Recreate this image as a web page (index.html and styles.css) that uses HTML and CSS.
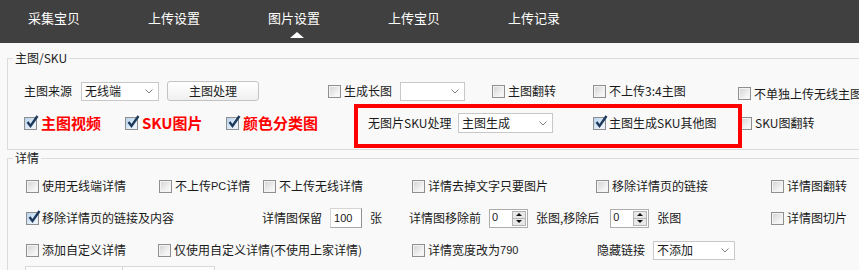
FILE: index.html
```html
<!DOCTYPE html>
<html>
<head>
	<meta charset="UTF-8">
	<title>图片设置</title>
	<link rel="stylesheet" href="styles.css">
</head>
<body>
	<div class="nav">
		<ul class="tabs">
			<li>采集宝贝</li>
			<li>上传设置</li>
			<li class="active">图片设置</li>
			<li>上传宝贝</li>
			<li>上传记录</li>
		</ul>
	</div>
	<div class="main">
		<!-- 主图 -->
		<fieldset class="group group-main">
			<legend>主图/SKU</legend>
			<div class="row row-src">
				<span>主图来源</span>
				<div class="select"><span>无线端</span><svg viewBox="0 0 8 5"><path d="M0.5 0.5 L4 4 L7.5 0.5" fill="none" stroke="#808080"/></svg></div>
				<div class="btn">主图处理</div>
				<label class="chk"><i class="cb"></i>生成长图</label>
				<div class="select sel-long"><span></span><svg viewBox="0 0 8 5"><path d="M0.5 0.5 L4 4 L7.5 0.5" fill="none" stroke="#808080"/></svg></div>
				<label class="chk"><i class="cb"></i>主图翻转</label>
				<label class="chk"><i class="cb"></i>不上传3:4主图</label>
				<label class="chk low"><i class="cb"></i>不单独上传无线主图</label>
			</div>
			<div class="row row-pic">
				<label class="chk red"><i class="cb on"><svg class="tick" viewBox="0 0 14 14"><path d="M2.5 7 L5.5 11 L12.5 1" fill="none" stroke="#1d3a5c" stroke-width="2.4"/></svg></i>主图视频</label>
				<label class="chk red"><i class="cb on"><svg class="tick" viewBox="0 0 14 14"><path d="M2.5 7 L5.5 11 L12.5 1" fill="none" stroke="#1d3a5c" stroke-width="2.4"/></svg></i>SKU图片</label>
				<label class="chk red"><i class="cb on"><svg class="tick" viewBox="0 0 14 14"><path d="M2.5 7 L5.5 11 L12.5 1" fill="none" stroke="#1d3a5c" stroke-width="2.4"/></svg></i>颜色分类图</label>
				<span>无图片SKU处理</span>
				<div class="select sel-sku"><span>主图生成</span><svg viewBox="0 0 8 5"><path d="M0.5 0.5 L4 4 L7.5 0.5" fill="none" stroke="#808080"/></svg></div>
				<label class="chk"><i class="cb on"><svg class="tick" viewBox="0 0 14 14"><path d="M2.5 7 L5.5 11 L12.5 1" fill="none" stroke="#1d3a5c" stroke-width="2.4"/></svg></i>主图生成SKU其他图</label>
				<label class="chk"><i class="cb"></i>SKU图翻转</label>
			</div>
		</fieldset>

		<!-- 详情 -->
		<fieldset class="group group-detail">
			<legend>详情</legend>
			<div class="row row-d1">
				<label class="chk"><i class="cb"></i>使用无线端详情</label>
				<label class="chk"><i class="cb"></i>不上传<span class="en">PC</span>详情</label>
				<label class="chk"><i class="cb"></i>不上传无线详情</label>
				<label class="chk"><i class="cb"></i>详情去掉文字只要图片</label>
				<label class="chk"><i class="cb"></i>移除详情页的链接</label>
				<label class="chk"><i class="cb"></i>详情图翻转</label>
			</div>
			<div class="row row-d2">
				<label class="chk"><i class="cb on"><svg class="tick" viewBox="0 0 14 14"><path d="M2.5 7 L5.5 11 L12.5 1" fill="none" stroke="#1d3a5c" stroke-width="2.4"/></svg></i>移除详情页的链接及内容</label>
				<div class="field">
					<span>详情图保留</span>
					<div class="num">100</div>
					<span>张</span>
				</div>
				<div class="field">
					<span>详情图移除前</span>
					<div class="spin"><span>0</span><div class="arrows"><b class="up"></b><b class="down"></b></div></div>
					<span>张图,移除后</span>
					<div class="spin wide"><span>0</span><div class="arrows"><b class="up"></b><b class="down"></b></div></div>
					<span>张图</span>
				</div>
				<label class="chk"><i class="cb"></i>详情图切片</label>
			</div>
			<div class="row row-d3">
				<label class="chk"><i class="cb"></i>添加自定义详情</label>
				<label class="chk"><i class="cb"></i>仅使用自定义详情(不使用上家详情)</label>
				<label class="chk"><i class="cb"></i>详情宽度改为<span class="en">790</span></label>
				<div class="field">
					<span>隐藏链接</span>
					<div class="select sel-hide"><span>不添加</span><svg viewBox="0 0 8 5"><path d="M0.5 0.5 L4 4 L7.5 0.5" fill="none" stroke="#808080"/></svg></div>
				</div>
			</div>
			<div class="tail">
				<div></div>
				<div class="t2"></div>
			</div>
		</fieldset>

		<!-- 标注框 -->
		<div class="mark"></div>
	</div>
</body>
</html>
```

FILE: styles.css
```css
* {margin: 0; padding: 0; box-sizing: border-box;}
ul, li {list-style: none;}
body {
	width: 859px;
	height: 270px;
	overflow: hidden;
	background: #f9f9f9;
	font: 12px/16px "Noto Sans CJK SC", sans-serif;
	color: #1a1a1a;
}
.nav {
	height: 43px;
	background: #404040;
}
.tabs {
	display: flex;
	margin-left: -6px;
}
.tabs li {
	width: 120px;
	text-align: center;
	color: #fff;
	font-size: 13px;
	line-height: 35px;
	position: relative;
}
.tabs li.active::after {
	content: "";
	position: absolute;
	left: 56px;
	top: 32px;
	border-left: 7px solid transparent;
	border-right: 7px solid transparent;
	border-bottom: 6px solid #fff;
}
.main {
	position: relative;
	padding-top: 7px;
}
.group {
	border: 1px solid #dcdcdc;
	margin: 0 -60px 0 7px;
	padding: 0 0 0 5px;
}
.group legend {
	padding: 0 2px;
	line-height: 16px;
	color: #222;
}
.group-main {
	padding-top: 9px;
	padding-bottom: 10px;
}
.group-detail {
	padding-top: 4px;
}
.row {
	display: grid;
	align-items: center;
	height: 32px;
	padding-left: 11px;
	white-space: nowrap;
}
.row-src {grid-template-columns: 57px 86px 161px 72px 92px 101px 145px max-content;}
.row-pic {grid-template-columns: 101px 101px 142px 90px 135px 146px max-content;}
.group-detail .row {padding-left: 13px;}
.row-d1 {grid-template-columns: 133px 104px 149px 184px 175px max-content;}
.row-d2 {grid-template-columns: 236px 147px 362px max-content;}
.row-d3 {grid-template-columns: 132px 254px 185px max-content;}

/* 复选框 */
.chk {
	display: flex;
	align-items: center;
}
.chk.low {margin-top: 5px;}
.cb {
	flex: none;
	width: 13px;
	height: 13px;
	margin-right: 3px;
	border: 1px solid #8f8f8f;
	background: linear-gradient(135deg, #d2d2d2, #f6f6f6 75%);
	box-shadow: inset 0 0 0 1px #f4f4f4;
	position: relative;
}
.cb.on {
	background: linear-gradient(135deg, #b7d2ec, #e9f2fb 75%);
	box-shadow: none;
}
.cb .tick {
	position: absolute;
	left: 0;
	top: -3px;
	width: 14px;
	height: 14px;
	overflow: visible;
}
.red {
	color: #f00;
	font-weight: bold;
	font-size: 15px;
}
.red .cb {margin-right: 4px;}
.en {
	font-family: "Liberation Sans", sans-serif;
	font-size: 11px;
}

/* 下拉框 */
.select {
	width: 78px;
	height: 19px;
	border: 1px solid #c8c8c8;
	background: #fff;
	display: flex;
	align-items: center;
	justify-content: space-between;
	padding: 0 5px 0 3px;
}
.select svg {
	width: 8px;
	height: 5px;
}
.sel-long {width: 65px;}
.sel-sku {width: 95px; height: 20px;}
.sel-hide {width: 82px;}

.btn {
	width: 92px;
	height: 20px;
	border: 1px solid #c3c3c3;
	border-radius: 3px;
	background: linear-gradient(#fff, #f0f0f0);
	text-align: center;
	line-height: 18px;
}

/* 输入 */
.field {
	display: flex;
	align-items: center;
	gap: 8px;
}
.num {
	width: 32px;
	height: 20px;
	border: 1px solid #d4d4d4;
	border-right-color: #8f8f8f;
	border-bottom-color: #a8a8a8;
	background: #fff;
	padding-left: 3px;
	font: 11px/18px "Liberation Sans", sans-serif;
}
.spin {
	width: 39px;
	height: 19px;
	border: 1px solid #adadad;
	background: #fff;
	display: flex;
}
.spin.wide {margin-left: 3px;}
.spin span {
	flex: 1;
	padding-left: 2px;
	font: 11px/14px "Liberation Sans", sans-serif;
}
.spin .arrows {
	width: 14px;
	margin: 1px;
	border: 1px solid #b4b4b4;
	background: #e8e8e8;
	display: flex;
	flex-direction: column;
}
.spin .arrows b {
	flex: 1;
	display: flex;
	align-items: center;
	justify-content: center;
}
.spin .arrows b + b {border-top: 1px solid #b4b4b4;}
.spin .up::before {
	content: "";
	border-left: 3px solid transparent;
	border-right: 3px solid transparent;
	border-bottom: 3px solid #111;
}
.spin .down::before {
	content: "";
	border-left: 3px solid transparent;
	border-right: 3px solid transparent;
	border-top: 3px solid #111;
}

.tail {
	display: flex;
	padding-left: 12px;
	height: 8px;
}
.tail div {
	width: 98px;
	border: 1px solid #d8d8d8;
	border-bottom: none;
	background: #fcfcfc;
}
.tail .t2 {width: 92px; border-left: none;}

/* 红色标注框 */
.mark {
	position: absolute;
	left: 354px;
	top: 61px;
	width: 388px;
	height: 44px;
	border: 4px solid #f00;
}
```
